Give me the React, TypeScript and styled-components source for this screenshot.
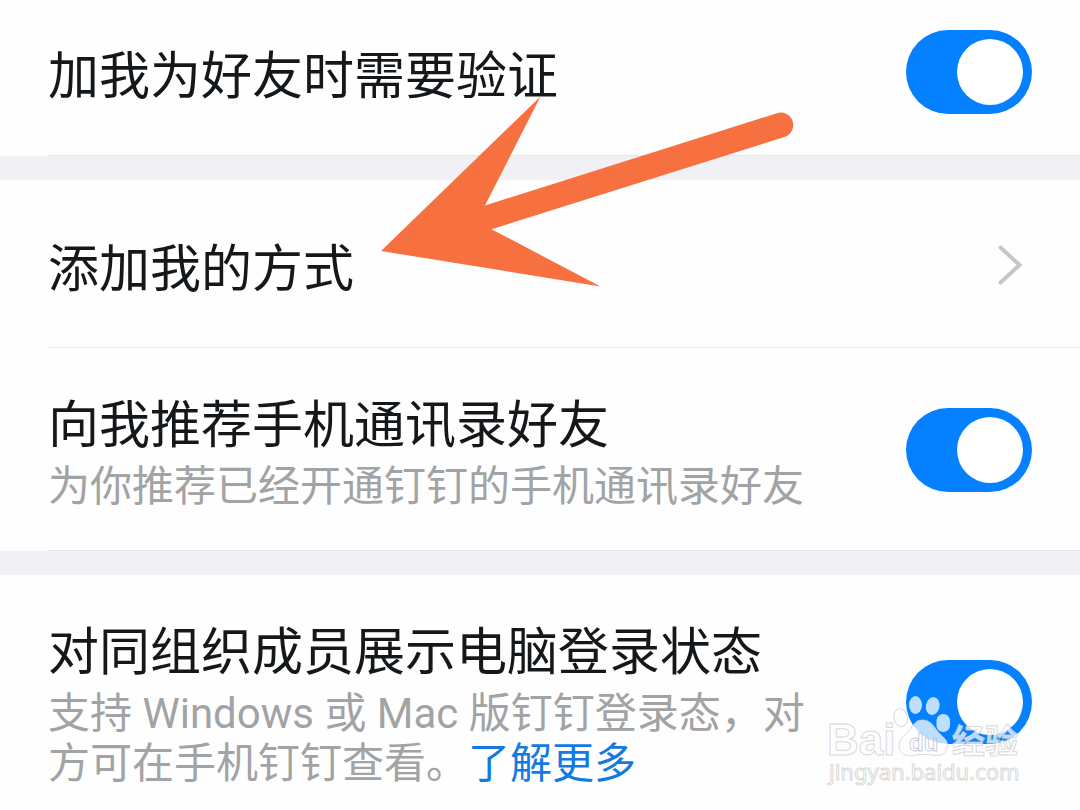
import React, { useState } from "react";
import styled, { createGlobalStyle } from "styled-components";

const GlobalStyle = createGlobalStyle`
  * { box-sizing: border-box; }
  body {
    margin: 0;
    background: #fefefe;
    font-family: "Noto Sans CJK SC", sans-serif;
    color: #15181b;
  }
`;

const Page = styled.main`
  overflow: hidden;
`;

const Group = styled.section`
  background: #fefefe;
  & + & {
    border-top: 24px solid #f0f0f5;
  }
`;

const Row = styled.div<{ $top: number; $bottom: number; $line?: boolean }>`
  position: relative;
  display: flex;
  align-items: center;
  justify-content: space-between;
  gap: 80px;
  margin-left: 48px;
  padding: ${(p) => p.$top}px 48px ${(p) => p.$bottom}px 0;
  border-bottom: ${(p) => (p.$line ? "1px solid #e6e6e9" : "none")};
`;

const RowLink = styled.a`
  flex: 1;
  display: flex;
  align-items: center;
  justify-content: space-between;
  padding-right: 9px;
  color: inherit;
  text-decoration: none;
`;

const TextBlock = styled.div`
  flex: 1;
  display: flex;
  flex-direction: column;
  gap: 8px;
`;

const Title = styled.label`
  font-size: 51px;
  line-height: 66px;
`;

const Note = styled.p`
  margin: 0;
  font-family: Roboto, "Noto Sans CJK SC", sans-serif;
  font-size: 42px;
  line-height: 50px;
  color: #a2a3a4;
`;

const MoreLink = styled.a`
  color: #147ae0;
  text-decoration: none;
`;

const Switch = styled.input`
  appearance: none;
  flex: none;
  display: flex;
  align-items: center;
  width: 126px;
  height: 84px;
  margin: 0;
  padding: 0 9px;
  border-radius: 42px;
  background: #d8d8dc;
  cursor: pointer;

  &::before {
    content: "";
    width: 66px;
    height: 66px;
    border-radius: 50%;
    background: #fff;
  }

  &:checked {
    justify-content: flex-end;
    background: #0580ff;
  }
`;

const Arrow = styled.svg`
  position: absolute;
  left: 332px;
  top: -85px;
  pointer-events: none;
`;

const Watermark = styled.svg`
  position: absolute;
  right: 50px;
  bottom: 20px;
  pointer-events: none;
`;

type SettingProps = {
  id: string;
  title: string;
  top: number;
  bottom: number;
  line?: boolean;
  note?: React.ReactNode;
  children?: React.ReactNode;
};

function SwitchRow({ id, title, top, bottom, line, note, children }: SettingProps) {
  const [on, setOn] = useState(true);
  return (
    <Row $top={top} $bottom={bottom} $line={line}>
      <TextBlock>
        <Title htmlFor={id}>{title}</Title>
        {note && <Note>{note}</Note>}
      </TextBlock>
      <Switch id={id} type="checkbox" role="switch" checked={on} onChange={() => setOn(!on)} />
      {children}
    </Row>
  );
}

function PointerArrow() {
  return (
    <Arrow width="414" height="194" viewBox="380 95 414 194" aria-hidden="true">
      <path
        fill="#f7703f"
        d="M381 251 540.500 96.500 485 205.500 777 113.200A12.200 12.200 0 0 1 784.500 137L491.500 229.200 600.500 286.500Z"
      />
    </Arrow>
  );
}

function BaiduMark() {
  return (
    <Watermark width="210" height="100" viewBox="820 690 210 100" aria-hidden="true">
      <g fill="#fff" fillOpacity="0.74" stroke="#cfcfcf" strokeOpacity="0.8" strokeWidth="1">
        <ellipse cx="915.500" cy="705" rx="6.500" ry="9" stroke="none" />
        <ellipse cx="932.700" cy="706" rx="6.800" ry="9" transform="rotate(12 932.7 706)" stroke="none" />
        <ellipse cx="900.700" cy="717.700" rx="6.800" ry="9" transform="rotate(-10 900.7 717.7)" />
        <rect x="936.500" y="714" width="13.500" height="18" rx="6.500" stroke="none" />
        <path d="M922.500 720C931 720 934 727 939 733C944 738 949 741 947 748C945 756 938 756 932 755C926 754 919 754 913 755.500C905 757 899 753 899 746C899 739 904 736 908 732C913 727 914 720 922.500 720Z" />
        <text x="827" y="755" fontSize="44" fontWeight="700" fontFamily="Liberation Sans, sans-serif">Bai</text>
        <text
          x="909"
          y="751"
          fontSize="24"
          fontWeight="700"
          fontFamily="Liberation Sans, sans-serif"
          fillOpacity="0.1"
          stroke="#b9c3cf"
        >
          du
        </text>
        <text x="952" y="753" fontSize="33" fontWeight="700" fontFamily="Noto Sans CJK SC, sans-serif">经验</text>
        <text x="829" y="780" fontSize="22" fontFamily="Noto Sans, sans-serif">jingyan.baidu.com</text>
      </g>
    </Watermark>
  );
}

export default function App() {
  return (
    <>
      <GlobalStyle />
      <Page>
        <Group>
          <SwitchRow id="verify" title="加我为好友时需要验证" top={30} bottom={41} line />
        </Group>
        <Group>
          <Row $top={52} $bottom={49} $line>
            <RowLink href="#add-methods">
              <Title as="span">添加我的方式</Title>
              <svg width="26" height="42" viewBox="0 0 26 42" aria-hidden="true">
                <path
                  d="M3.500 3.500 22.500 21 3.500 38.500"
                  fill="none"
                  stroke="#c6c6c6"
                  strokeWidth="4"
                  strokeLinecap="round"
                  strokeLinejoin="miter"
                />
              </svg>
            </RowLink>
            <PointerArrow />
          </Row>
          <SwitchRow
            id="contacts"
            title="向我推荐手机通讯录好友"
            top={40}
            bottom={38}
            line
            note="为你推荐已经开通钉钉的手机通讯录好友"
          />
        </Group>
        <Group>
          <SwitchRow
            id="status"
            title="对同组织成员展示电脑登录状态"
            top={40}
            bottom={21}
            note={
              <>
                支持 Windows 或 Mac 版钉钉登录态，对方可在手机钉钉查看。
                <MoreLink href="#more">了解更多</MoreLink>
              </>
            }
          >
            <BaiduMark />
          </SwitchRow>
        </Group>
      </Page>
    </>
  );
}
